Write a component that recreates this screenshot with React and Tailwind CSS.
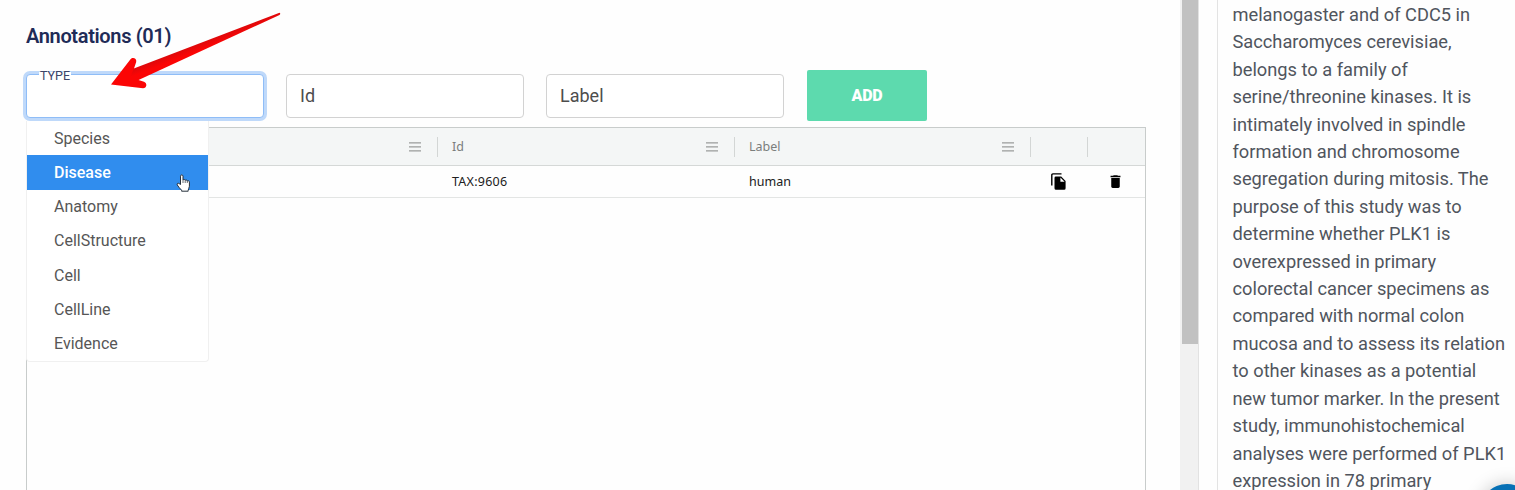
import { MdDelete } from "react-icons/md";

const types = ["Species", "Disease", "Anatomy", "CellStructure", "Cell", "CellLine", "Evidence"];

const abstractLines = [
  "melanogaster and of CDC5 in",
  "Saccharomyces cerevisiae,",
  "belongs to a family of",
  "serine/threonine kinases. It is",
  "intimately involved in spindle",
  "formation and chromosome",
  "segregation during mitosis. The",
  "purpose of this study was to",
  "determine whether PLK1 is",
  "overexpressed in primary",
  "colorectal cancer specimens as",
  "compared with normal colon",
  "mucosa and to assess its relation",
  "to other kinases as a potential",
  "new tumor marker. In the present",
  "study, immunohistochemical",
  "analyses were performed of PLK1",
  "expression in 78 primary",
];

function MenuIcon() {
  return (
    <svg width="12" height="10" viewBox="0 0 12 10" className="text-[#999c9b]">
      <path d="M0 .8h12M0 4.8h12M0 8.8h12" stroke="currentColor" strokeWidth="1.2" />
    </svg>
  );
}

function CopyIcon() {
  return (
    <svg width="15" height="17" viewBox="0 0 15 17" className="mb-px ml-[20px] text-black">
      <path d="M.8 12.5V2Q.8.9 1.9.9H10.5" fill="none" stroke="currentColor" strokeWidth="1.4" />
      <path
        d="M4.8 3.6h5.4L14.6 8v7.2q0 1.5-1.5 1.5H5q-1.5 0-1.5-1.5V4.9q0-1.3 1.3-1.3zM9.4 4.6v4.2h4.2z"
        fill="currentColor"
        fillRule="evenodd"
      />
    </svg>
  );
}

function HeaderCell({ label, menu }) {
  return (
    <div className="flex items-center justify-between">
      <span className="pl-[14px] pt-[2px]">{label}</span>
      <div className="flex items-center gap-4">
        {menu && <MenuIcon />}
        <span className="h-5 w-px bg-[#d3d6d5]" />
      </div>
    </div>
  );
}

function TypeMenu() {
  return (
    <ul className="absolute left-0 top-[47px] z-10 w-[182.5px] rounded-b-[4px] border border-t-0 border-[#f0f0f0] bg-white text-[16px] text-[#565656]">
      {types.map((t) => (
        <li
          key={t}
          className={
            t === "Disease"
              ? "flex h-[34.25px] items-center bg-[#308dee] pl-[27px] pt-px font-medium text-white"
              : "flex h-[34.25px] items-center pl-[27px] pt-px"
          }
        >
          {t}
        </li>
      ))}
    </ul>
  );
}

function Pointer() {
  return (
    <svg className="absolute left-[176px] top-[174px] z-20" width="15" height="18" viewBox="0 0 15 18">
      <path
        d="M4.5 10.5V2.2C4.5.4 7 .4 7 2.2V6c.6-.8 2-.6 2.2.3.7-.6 1.9-.3 2.1.6 1-.5 2.1 0 2.1 1.2v4.2c0 1.5-1.2 2.5-1.2 4v.9H5.6v-1C4.2 14.8 2.4 12.9 1.3 11c-.8-1.4.8-2.3 1.8-1.4z"
        fill="#fff"
        stroke="#26303b"
        strokeWidth="1"
      />
      <path d="M7 6v3M9.2 6.5V9M11.3 7v2" stroke="#26303b" strokeWidth=".7" />
    </svg>
  );
}

function Arrow() {
  return (
    <svg className="absolute left-[108px] top-[8px] z-20" width="176" height="84" viewBox="108 8 176 84">
      <defs>
        <linearGradient id="arrow" gradientUnits="userSpaceOnUse" x1="200" y1="37" x2="205" y2="50">
          <stop offset="0" stopColor="#c40c10" />
          <stop offset="0.9" stopColor="#fb0505" />
        </linearGradient>
      </defs>
      <path
        d="M111 84.5 130.5 59.3C132.5 56.8 137 58.3 136.2 62L134 68.5 138.5 80 144 81.7C147.5 83 147 88.3 143 88.3Z"
        fill="#fb0505"
      />
      <path d="M133.8 68.6 279.5 12.7Q281 13.5 279.5 15L138 80.2 130 78Z" fill="url(#arrow)" />
    </svg>
  );
}

export default function App() {
  return (
    <div className="relative flex h-[490px] w-[1515px] overflow-hidden bg-[#fefefe] font-['Roboto',sans-serif]">
      <main className="flex w-[1180px] shrink-0 flex-col pl-[26px]">
        <h2 className="mt-[22px] h-7 text-[20px] font-semibold leading-7 tracking-[-0.35px] text-[#1f2b57]">
          Annotations (01)
        </h2>

        <div className="mt-5 flex h-[51px] items-center">
          <div className="relative mt-px h-[44px] w-[238px] rounded-[4px] border border-[#8fbdf7] bg-white ring-[3px] ring-[#bfd9fa]">
            <label className="absolute left-[12px] top-[-8.5px] bg-[linear-gradient(transparent_28%,white_28%)] px-px text-[12.5px] leading-[18px] text-[#3c4468]">
              TYPE
            </label>
            <div className="absolute -left-px -top-px">
              <TypeMenu />
            </div>
          </div>
          <div className="ml-[22px] mt-px flex h-[44px] w-[238px] items-center rounded-[4px] border border-[#d2d2d2] bg-white pb-[2px] pl-[13px] text-[18px] text-[#4d4d4d]">
            Id
          </div>
          <div className="ml-[22px] mt-px flex h-[44px] w-[238px] items-center rounded-[4px] border border-[#d2d2d2] bg-white pb-[2px] pl-[13px] text-[18px] text-[#4d4d4d]">
            Label
          </div>
          <button className="ml-[23px] h-[51px] w-[120px] rounded-[2px] bg-[#5ddaae] text-[16px] font-black tracking-[-0.2px] text-white">
            ADD
          </button>
        </div>

        <div className="mt-[6px] h-[370px] w-[1120px] shrink-0 border border-b-0 border-[#c8cccb] font-['Noto_Sans',sans-serif] text-[12.5px]">
          <div className="grid h-[38px] grid-cols-[411px_297px_296px_57px_57px] border-b border-[#d5d8d7] bg-[#f4f6f6] text-[#7b7e7d]">
            <HeaderCell label="" menu />
            <HeaderCell label="Id" menu />
            <HeaderCell label="Label" menu />
            <HeaderCell label="" />
            <div />
          </div>
          <div className="grid h-[32px] grid-cols-[411px_297px_296px_57px_57px] items-center border-b border-[#e3e5e4] text-[#202020]">
            <span />
            <span className="pl-[14px] pt-px tracking-[0.25px]">TAX:9606</span>
            <span className="pl-[14px] pt-px">human</span>
            <CopyIcon />
            <MdDelete className="ml-[19px] text-[17px] text-black" />
          </div>
        </div>
      </main>

      <div className="w-[19px] shrink-0 border-r border-[#e2e2e2] bg-[#f1f1f1]">
        <div className="ml-[2px] h-[344px] w-[16px] bg-[#c1c1c1]" />
      </div>

      <aside className="ml-[18px] shrink-0 grow border-l border-[#e3e3e3] pl-[14.5px] pt-px text-[18.25px] leading-[27.4px] text-[#50555d]">
        {abstractLines.map((line) => (
          <p key={line} className="whitespace-nowrap">
            {line}
          </p>
        ))}
      </aside>

      <Arrow />
      <Pointer />
      <div className="absolute left-[1480px] top-[484px] size-[54px] rounded-full bg-[#0670b5] shadow-[0_0_18px_rgba(0,0,0,0.22)]" />
    </div>
  );
}
